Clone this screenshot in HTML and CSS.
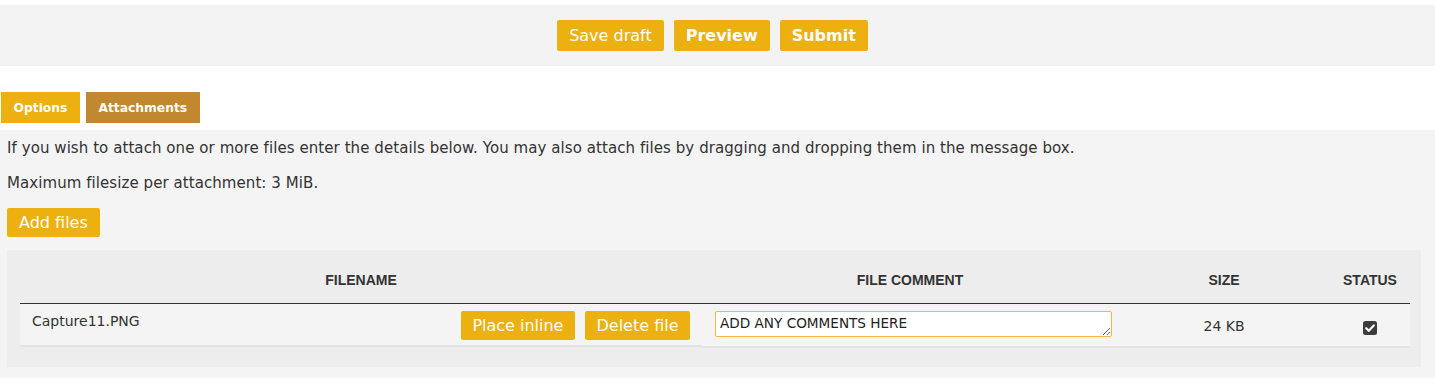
FILE: index.html
```html
<!DOCTYPE html>
<html lang="en">
<head>
  <meta charset="UTF-8">
  <title>Attachments</title>
  <link rel="stylesheet" href="styles.css">
</head>
<body>
  <div class="submit-bar">
    <button class="btn">Save draft</button>
    <button class="btn btn-bold">Preview</button>
    <button class="btn btn-bold">Submit</button>
  </div>

  <ul class="tabs">
    <li class="tab">Options</li>
    <li class="tab tab-active">Attachments</li>
  </ul>

  <div class="panel">
    <p class="hint">If you wish to attach one or more files enter the details below. You may also attach files by dragging and dropping them in the message box.</p>
    <p class="hint">Maximum filesize per attachment: 3 MiB.</p>
    <button class="btn btn-add">Add files</button>

    <div class="file-box">
      <table class="file-list">
        <colgroup>
          <col class="col-name">
          <col class="col-comment">
          <col class="col-size">
          <col class="col-status">
        </colgroup>
        <thead>
          <tr>
            <th>Filename</th>
            <th>File comment</th>
            <th>Size</th>
            <th>Status</th>
          </tr>
        </thead>
        <tbody>
          <tr>
            <td class="file-name">
              <span>Capture11.PNG</span>
              <span class="file-actions">
                <button class="btn btn-small">Place inline</button>
                <button class="btn btn-small">Delete file</button>
              </span>
            </td>
            <td class="file-comment"><textarea rows="1">ADD ANY COMMENTS HERE</textarea></td>
            <td class="file-size">24 KB</td>
            <td class="file-status">
              <svg width="14" height="14" viewBox="0 0 14 14">
                <rect x="0" y="0" width="14" height="14" rx="2.5" fill="#3c3c3c"/>
                <path d="M3.2 7.2 L5.8 9.8 L10.8 4.4" fill="none" stroke="#fff" stroke-width="2.2" stroke-linecap="round" stroke-linejoin="round"/>
              </svg>
            </td>
          </tr>
        </tbody>
      </table>
    </div>
  </div>
</body>
</html>
```

FILE: styles.css
```css
body {
  margin: 0;
  font-family: "DejaVu Sans", Verdana, sans-serif;
  font-size: 15px;
  color: #333;
  background-color: #fff;
}

.btn {
  background-color: #edb011;
  color: #fff;
  border: none;
  border-radius: 2px;
  font-family: "DejaVu Sans", Verdana, sans-serif;
  font-size: 16px;
  padding: 0 12px;
  height: 31px;
  cursor: pointer;
}
.btn-bold {
  font-weight: bold;
}

.submit-bar {
  margin-top: 5px;
  height: 61px;
  background-color: #f3f3f3;
  display: flex;
  justify-content: center;
  align-items: center;
  gap: 10px;
  padding-right: 10px;
}

.tabs {
  list-style: none;
  margin: 26px 0 0 1px;
  padding: 0;
  display: flex;
  gap: 6px;
}
.tab {
  background-color: #edb011;
  color: #fff;
  font-weight: bold;
  font-size: 12.3px;
  height: 31px;
  line-height: 32px;
  padding: 0 12.5px;
}
.tab-active {
  background-color: #c1882f;
}

.panel {
  margin-top: 7px;
  background-color: #f4f4f4;
  padding: 9px 14px 11px 7px;
}
.hint {
  margin: 0 0 16px 0;
  line-height: 19px;
  letter-spacing: 0.07px;
}
.hint + .hint {
  margin-bottom: 15px;
}

.btn-add {
  height: 29px;
  padding: 0 12px;
}

.file-box {
  margin-top: 13px;
  background-color: #ededed;
  padding: 0 11px 19px 13px;
}

.file-list {
  width: 100%;
  table-layout: fixed;
  border-collapse: collapse;
  font-size: 14px;
}
.col-name { width: 682px; }
.col-comment { width: 416px; }
.col-size { width: 212px; }
.col-status { width: 80px; }

.file-list th {
  font-family: "Liberation Sans", Arial, sans-serif;
  font-size: 14px;
  font-weight: bold;
  text-transform: uppercase;
  color: #333;
  height: 46px;
  padding: 7px 0 0 0;
  vertical-align: middle;
  border-bottom: 1px solid #333;
}
.file-list td {
  background-color: #f4f4f4;
  border-bottom: 2px solid #e4e4e4;
  padding: 7px 12px 5px 12px;
  vertical-align: middle;
}

.file-list .file-name {
  display: flex;
  justify-content: space-between;
  align-items: flex-start;
}
.file-name span:first-child {
  padding-top: 2px;
}
.file-actions {
  display: flex;
  gap: 10px;
}
.btn-small {
  height: 29px;
  padding: 0 11.5px;
}

.file-comment textarea {
  display: block;
  width: 397px;
  height: 26px;
  box-sizing: border-box;
  margin: 0;
  padding: 3px 4px;
  border: 1px solid #f7b542;
  border-radius: 2px;
  font-family: "DejaVu Sans", Verdana, sans-serif;
  font-size: 13.6px;
  color: #222;
  background-color: #fff;
  resize: vertical;
  overflow: hidden;
}
.file-list .file-comment {
  padding: 7px 6px 9px 13px;
}

.file-size,
.file-status {
  text-align: center;
}
.file-list .file-status {
  padding-top: 10px;
}
.file-status svg {
  display: block;
  margin: 0 auto;
}
```
